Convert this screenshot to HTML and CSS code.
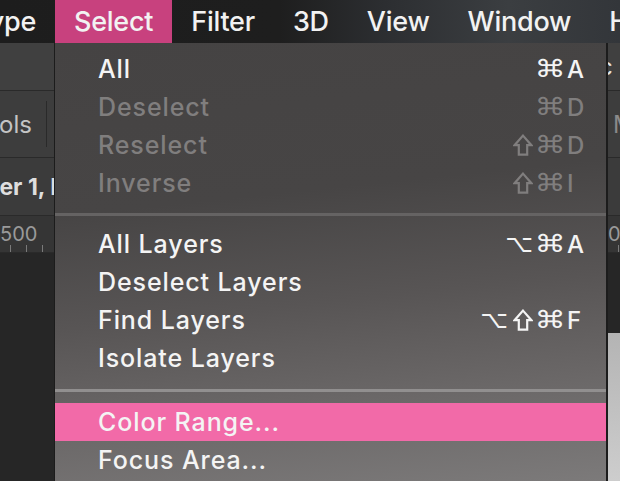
FILE: index.html
```html
<!DOCTYPE html>
<html>
<head>
    <title>Select Menu</title>
    <link rel="stylesheet" href="styles.css">
</head>
<body>
    <div class="menubar">
        <span class="menubar-item clipped">Type</span>
        <span class="menubar-item active">Select</span>
        <span class="menubar-item">Filter</span>
        <span class="menubar-item">3D</span>
        <span class="menubar-item">View</span>
        <span class="menubar-item">Window</span>
        <span class="menubar-item">Help</span>
    </div>

    <div class="workspace">
        <div class="row options-row">
            <div class="cell"></div>
            <div class="cell"></div>
            <div class="cell"><span class="edge-glyph">c</span></div>
        </div>
        <div class="row tools-row">
            <div class="cell">
                <span class="tools-label">Tools</span>
                <span class="divider"></span>
            </div>
            <div class="cell"></div>
            <div class="cell"><span class="mode-label">M</span></div>
        </div>
        <div class="row tab-row">
            <div class="cell"><span class="tab-label">Layer 1, R</span></div>
            <div class="cell"></div>
            <div class="cell"></div>
        </div>
        <div class="row ruler-row">
            <div class="cell"><span class="ruler-num">500</span></div>
            <div class="cell"></div>
            <div class="cell"><span class="ruler-num">0</span></div>
        </div>
        <div class="row canvas-row">
            <div class="cell"></div>
            <div class="cell"></div>
            <div class="cell doc-edge"><div class="doc"></div></div>
        </div>
    </div>

    <div class="dropdown">
        <div class="item">
            <span>All</span>
            <span class="mods"><span class="cmd">⌘</span></span>
            <span class="key">A</span>
        </div>
        <div class="item disabled">
            <span>Deselect</span>
            <span class="mods"><span class="cmd">⌘</span></span>
            <span class="key">D</span>
        </div>
        <div class="item disabled">
            <span>Reselect</span>
            <span class="mods">
                <svg class="shift" viewBox="0 0 20 22"><path d="M10 1.6 L18.4 11.2 H14.2 V20.6 H5.8 V11.2 H1.6 Z"/></svg>
                <span class="cmd">⌘</span>
            </span>
            <span class="key">D</span>
        </div>
        <div class="item disabled">
            <span>Inverse</span>
            <span class="mods">
                <svg class="shift" viewBox="0 0 20 22"><path d="M10 1.6 L18.4 11.2 H14.2 V20.6 H5.8 V11.2 H1.6 Z"/></svg>
                <span class="cmd">⌘</span>
            </span>
            <span class="key">I</span>
        </div>
        <div class="sep"></div>
        <div class="item">
            <span>All Layers</span>
            <span class="mods"><span class="opt">⌥</span><span class="cmd">⌘</span></span>
            <span class="key">A</span>
        </div>
        <div class="item">
            <span>Deselect Layers</span>
        </div>
        <div class="item">
            <span>Find Layers</span>
            <span class="mods">
                <span class="opt">⌥</span>
                <svg class="shift" viewBox="0 0 20 22"><path d="M10 1.6 L18.4 11.2 H14.2 V20.6 H5.8 V11.2 H1.6 Z"/></svg>
                <span class="cmd">⌘</span>
            </span>
            <span class="key">F</span>
        </div>
        <div class="item">
            <span>Isolate Layers</span>
        </div>
        <div class="sep lower"></div>
        <div class="item hover">
            <span>Color Range...</span>
        </div>
        <div class="item">
            <span>Focus Area...</span>
        </div>
    </div>
</body>
</html>
```

FILE: styles.css
```css
* {
    box-sizing: border-box;
}

body {
    margin: 0;
    width: 620px;
    height: 481px;
    overflow: hidden;
    position: relative;
    background: #262626;
    font-family: Inter, "Noto Sans", sans-serif;
}

/* top menu bar */
.menubar {
    display: flex;
    height: 43px;
    background: linear-gradient(90deg, #1d1d1d 0%, #1e1e1e 45%, #2c2e31 62%, #3b3e41 82%, #33363a 100%);
    color: #f2f2f2;
    font-size: 27px;
    font-weight: 500;
    letter-spacing: -0.25px;
}

.menubar-item {
    display: flex;
    align-items: center;
    padding: 0 19px;
    white-space: nowrap;
    flex: none;
}

.menubar-item.clipped {
    width: 55px;
    padding-left: 0;
    justify-content: flex-end;
    overflow: hidden;
}

.menubar-item.active {
    background: #c8417e;
}

/* app panels behind the menu */
.row {
    display: grid;
    grid-template-columns: 54px 1fr 12px;
    border-bottom: 1px solid #2a2a2a;
}

.cell {
    display: flex;
    align-items: center;
    overflow: hidden;
    white-space: nowrap;
}

.options-row {
    height: 48px;
    background: #404040;
}

.tools-row {
    height: 67px;
    background: #3d3d3d;
}

.tab-row {
    height: 58px;
    background: #3b3b3b;
}

.ruler-row {
    height: 37px;
    background: #353535;
}

.ruler-row .cell {
    background: repeating-linear-gradient(90deg, transparent 0 10px, #7a7a7a 10px 11px, transparent 11px 16px) bottom / 100% 7px no-repeat;
}

.canvas-row {
    height: 228px;
    border-bottom: none;
    background: #262626;
}

.edge-glyph {
    color: #e6e6e6;
    font-size: 24px;
    margin-left: -9px;
}

.tools-label {
    color: #c4c4c4;
    font-size: 24px;
    margin-left: -29px;
}

.divider {
    width: 1px;
    height: 46px;
    margin-left: 14px;
    background: #2a2a2a;
}

.mode-label {
    color: #8a8a8a;
    font-size: 24px;
    margin-left: 5px;
}

.tab-label {
    color: #dedede;
    font-size: 23px;
    font-weight: 700;
    margin-left: -40px;
}

.ruler-num {
    color: #9a9a9a;
    font-size: 20px;
}

.doc-edge {
    align-items: flex-end;
}

.doc {
    width: 100%;
    height: 148px;
    background: linear-gradient(180deg, #b4b4b4, #cdcdcd);
}

/* dropdown menu */
.dropdown {
    position: absolute;
    top: 43px;
    left: 54px;
    bottom: 0;
    width: 554px;
    padding-top: 7px;
    border-left: 1px solid #1c1c1c;
    border-right: 2px solid #1c1c1c;
    background: linear-gradient(174deg, #454343 0%, #474545 35%, #585555 58%, #6a6767 78%, #7c7a7a 100%);
    color: #f4f4f4;
    font-size: 25px;
    font-weight: 500;
    letter-spacing: 0.9px;
}

.item {
    display: grid;
    grid-template-columns: 1fr auto 19px;
    align-items: center;
    height: 38px;
    padding: 0 20px 0 43px;
    white-space: nowrap;
}

.item.disabled {
    color: #807e7e;
}

.item.hover {
    background: #f26aa8;
}

.key {
    font-size: 24px;
    letter-spacing: 0;
}

.mods {
    display: flex;
    align-items: center;
    gap: 5px;
    margin-right: 5px;
    font-family: "DejaVu Sans", sans-serif;
    font-size: 24px;
    letter-spacing: 0;
}

.cmd {
    display: inline-block;
    width: 24px;
    text-align: center;
    transform: scaleX(1.3);
}

.shift {
    width: 20px;
    height: 22px;
    fill: none;
    stroke: currentColor;
    stroke-width: 2.2;
}

.sep {
    height: 3px;
    margin: 11px 0 9px;
    background: #656363;
}

.sep.lower {
    margin: 12px 0 11px;
    background: #918f8f;
}
```
